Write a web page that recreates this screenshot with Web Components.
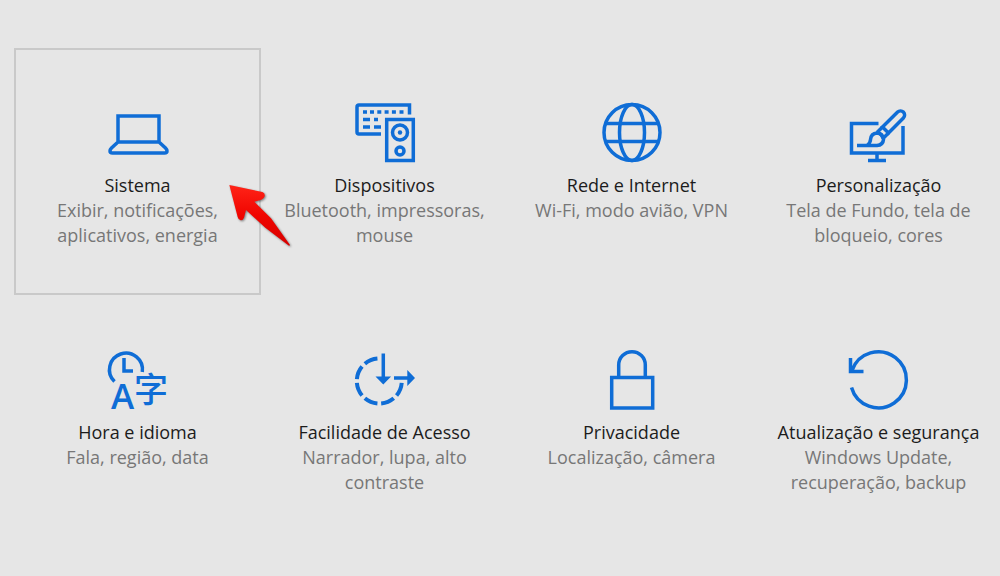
<!DOCTYPE html>
<html lang="pt-BR">
<head>
<meta charset="utf-8">
<meta name="viewport" content="width=device-width, initial-scale=1">
<title>Configurações</title>
<style>
  body { margin: 0; background: #e6e6e6; overflow-x: hidden; font-family: "Open Sans", "Noto Sans", sans-serif; }
</style>
</head>
<body>
<settings-grid>
  <settings-tile icon="system" selected>Sistema<span slot="desc">Exibir, notificações, aplicativos, energia</span><pointer-arrow slot="overlay"></pointer-arrow></settings-tile>
  <settings-tile icon="devices">Dispositivos<span slot="desc">Bluetooth, impressoras, mouse</span></settings-tile>
  <settings-tile icon="network">Rede e Internet<span slot="desc">Wi-Fi, modo avião, VPN</span></settings-tile>
  <settings-tile icon="personal">Personalização<span slot="desc">Tela de Fundo, tela de bloqueio, cores</span></settings-tile>
  <settings-tile icon="time">Hora e idioma<span slot="desc">Fala, região, data</span></settings-tile>
  <settings-tile icon="ease">Facilidade de Acesso<span slot="desc">Narrador, lupa, alto contraste</span></settings-tile>
  <settings-tile icon="privacy">Privacidade<span slot="desc">Localização, câmera</span></settings-tile>
  <settings-tile icon="update">Atualização e segurança<span slot="desc">Windows Update, recuperação, backup</span></settings-tile>
</settings-grid>

<script>
const ICONS = {
  system: `<path d="M11 14h41v26H11zM11 40l-6.500 6q-1.500 1.500-1.500 3 0 2 2.500 2h52q2.500 0 2.500-2 0-1.500-1.500-3L52 40"/>`,
  devices: `<path d="M55.500 12.500V3H5Q3 3 3 5v25q0 2 2 2h22"/>
    <path d="M9 10h4m3 0h4m3.300 0h4m3.300 0h4m3.300 0h4m3.600 0h4M9 17.500h7m4 0h4M9 25h7m4 0h7"/>
    <path d="M32.700 17.500h26.600v41H32.700z"/><circle cx="46" cy="30.500" r="7.500"/><circle cx="46" cy="30.500" r="2.200" fill="currentColor" stroke="none"/><circle cx="46" cy="49" r="4"/>`,
  network: `<circle cx="31" cy="30.500" r="28"/><ellipse cx="31" cy="30.500" rx="12.500" ry="28"/><path d="M4.500 21.500h53M4.500 39.500h53"/>`,
  personal: `<path d="M30.500 21.500H3.500V51h51.500V24M29 51v7M20 58.500h18"/>
    <path d="M34.500 25L49.600 10.100a4.100 4.100 0 0 1 5.800 5.800L40.500 31z"/>
    <path d="M34.500 25L29 30.500M40.500 31L35 36.500M29 30.500q5 1 6 6"/>
    <path d="M9 43.500h20q6-.500 6.500-6-.500-6-6.500-6.500-6 .500-6.500 6.500 0 3-3 5.500"/>`,
  time: `<path d="M7.500 32.500A16.500 16.500 0 1 1 35.300 23M17 9V22H26"/>
    <g fill="currentColor" stroke="none"><text x="4" y="60" font-family="Open Sans, sans-serif" font-weight="600" font-size="35">A</text>
    <text x="27" y="53" font-family="Noto Sans CJK SC, sans-serif" font-weight="500" font-size="34">字</text></g>`,
  ease: `<circle cx="25.300" cy="32" r="22.500" pathLength="360" stroke-width="4" stroke-dasharray="0 5 35 10 35 10 35 10 35 10 35 10 35 95"/>
    <path d="M29.300 4.500V29M40 29H55"/><path fill="currentColor" stroke="none" d="M21.500 27.500h15.600l-7.800 8zM53.300 21v16L61 29z"/>`,
  privacy: `<path d="M10.700 28.500h41v30.500h-41zM17.700 28V16a13.300 13.300 0 0 1 26.600 0v12"/>`,
  update: `<path d="M4 21.500A28 28 0 1 1 3.500 38.500M2.500 9V22.500H15.500"/>`
};

class SettingsGrid extends HTMLElement {
  constructor() {
    super();
    this.attachShadow({ mode: 'open' }).innerHTML = `
      <style>
        :host { display: block; padding: 48px 0 32px 14px; }
        nav { display: grid; grid-template-columns: repeat(4, minmax(0, 1fr)); margin-right: -2px; }
        @media (max-width: 800px) { nav { grid-template-columns: repeat(2, minmax(0, 1fr)); } }
      </style>
      <nav aria-label="Configurações"><slot></slot></nav>`;
  }
}

class SettingsTile extends HTMLElement {
  constructor() {
    super();
    this.attachShadow({ mode: 'open' }).innerHTML = `
      <style>
        :host { display: block; position: relative; }
        a { box-sizing: border-box; height: 100%; min-height: 247px; padding: 52px 20px 44px; border: 2px solid transparent;
            display: flex; flex-direction: column; align-items: center; text-align: center;
            text-decoration: none; color: #1c1c1c; font-size: 18px; line-height: 25px; }
        :host([selected]) a { border-color: #c9c9c9; }
        svg { width: 61px; height: 61px; margin-bottom: 10px; overflow: visible; color: #0f6dd6;
              fill: none; stroke: currentColor; stroke-width: 3.5; }
        .title { white-space: nowrap; }
        .desc { color: #777; }
      </style>
      <a href="#${this.getAttribute('icon')}">
        <svg viewBox="0 0 61 61" aria-hidden="true">${ICONS[this.getAttribute('icon')]}</svg>
        <span class="title"><slot></slot></span>
        <span class="desc"><slot name="desc"></slot></span>
      </a>
      <slot name="overlay"></slot>`;
  }
}

class PointerArrow extends HTMLElement {
  constructor() {
    super();
    this.attachShadow({ mode: 'open' }).innerHTML = `
      <style>
        :host { position: absolute; top: 122px; right: -44px; z-index: 1; width: 90px; height: 90px; pointer-events: none; }
        svg { display: block; filter: drop-shadow(1px 1px 1px #0007); }
      </style>
      <svg width="90" height="90" viewBox="0 0 270 270" aria-hidden="true">
        <defs><linearGradient id="red" x2="0" y2="1"><stop stop-color="#ff2418"/><stop offset=".5" stop-color="#f00500"/><stop offset="1" stop-color="#d80000"/></linearGradient></defs>
        <path fill="url(#red)" d="M43 45L142 66Q151 70 149 79 147 87 139 89L118 95 168 145 225 225Q223 229 219 225L151 173 93 120 87 143Q84 151 77 151 70 150 68 141Z"/>
      </svg>`;
  }
}

customElements.define('settings-grid', SettingsGrid);
customElements.define('settings-tile', SettingsTile);
customElements.define('pointer-arrow', PointerArrow);
</script>
</body>
</html>
